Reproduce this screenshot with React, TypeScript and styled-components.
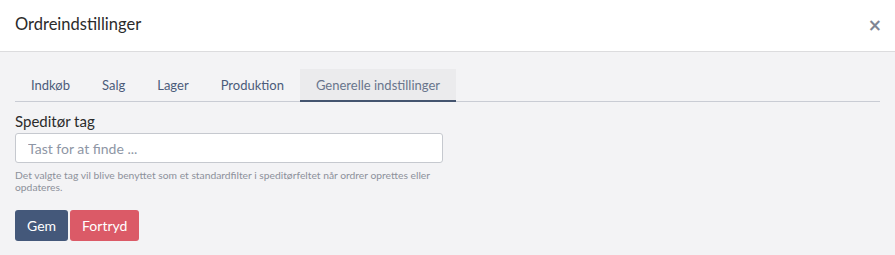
import React, { useState } from "react";
import styled, { createGlobalStyle } from "styled-components";

const GlobalStyle = createGlobalStyle`
  html, body {
    margin: 0;
    padding: 0;
    background: #f3f3f5;
    font-family: Lato, "Open Sans", sans-serif;
  }
`;

const Modal = styled.div`
  width: 895px;
  height: 255px;
  background: #f3f3f5;
  overflow: hidden;
`;

const Header = styled.div`
  height: 52px;
  box-sizing: border-box;
  background: #fff;
  border-bottom: 1px solid #dcdcde;
  display: flex;
  align-items: center;
  justify-content: space-between;
  padding: 0 13px 0 15px;
`;

const Title = styled.h4`
  margin: 0;
  font-size: 16.5px;
  font-weight: 400;
  color: #2b2b2b;
  padding-bottom: 3px;
`;

const Close = styled.button`
  border: 0;
  background: none;
  color: #7f8594;
  font-size: 17px;
  font-weight: 700;
  line-height: 1;
  padding: 0;
  cursor: pointer;
  font-family: "DejaVu Sans", sans-serif;
`;

const Body = styled.div`
  padding: 17px 15px 0 15px;
`;

const Tabs = styled.div`
  display: flex;
  border-bottom: 1px solid #c9ccd4;
`;

const Tab = styled.div<{ $active?: boolean }>`
  padding: 0 16px;
  height: 31px;
  display: flex;
  align-items: center;
  font-size: 13px;
  color: ${(p) => (p.$active ? "#69758c" : "#4b5b7a")};
  background: ${(p) => (p.$active ? "#ebebed" : "transparent")};
  border-bottom: 2px solid ${(p) => (p.$active ? "#44546f" : "transparent")};
  margin-bottom: -1px;
  cursor: pointer;
`;

const Field = styled.div`
  width: 428px;
  padding-top: 10px;
`;

const Label = styled.label`
  display: block;
  font-size: 15px;
  color: #2b2b2b;
  margin-bottom: 3px;
`;

const Input = styled.input`
  width: 100%;
  box-sizing: border-box;
  height: 30px;
  border: 1px solid #c6c9cf;
  border-radius: 3px;
  background: #fff;
  padding: 0 12px;
  font-family: inherit;
  font-size: 14px;
  color: #333;
  &::placeholder {
    color: #8e96a5;
  }
`;

const Help = styled.p`
  margin: 6px 0 0;
  font-size: 10.3px;
  line-height: 12px;
  color: #8d919b;
`;

const Actions = styled.div`
  display: flex;
  gap: 2px;
  margin-top: 17px;
`;

const Button = styled.button<{ $variant: "primary" | "danger" }>`
  height: 31px;
  padding: 0 12px;
  border: 0;
  border-radius: 3px;
  font-family: inherit;
  font-size: 14px;
  color: #fff;
  background: ${(p) => (p.$variant === "primary" ? "#44587a" : "#db5a67")};
  cursor: pointer;
`;

const tabs = ["Indkøb", "Salg", "Lager", "Produktion", "Generelle indstillinger"];

const App: React.FC = () => {
  const [active, setActive] = useState(4);
  return (
    <>
      <GlobalStyle />
      <Modal>
        <Header>
          <Title>Ordreindstillinger</Title>
          <Close>×</Close>
        </Header>
        <Body>
          <Tabs>
            {tabs.map((t, i) => (
              <Tab key={t} $active={i === active} onClick={() => setActive(i)}>
                {t}
              </Tab>
            ))}
          </Tabs>
          <Field>
            <Label>Speditør tag</Label>
            <Input placeholder="Tast for at finde ..." />
            <Help>
              Det valgte tag vil blive benyttet som et standardfilter i speditørfeltet når ordrer
              oprettes eller opdateres.
            </Help>
          </Field>
          <Actions>
            <Button $variant="primary">Gem</Button>
            <Button $variant="danger">Fortryd</Button>
          </Actions>
        </Body>
      </Modal>
    </>
  );
};

export default App;
